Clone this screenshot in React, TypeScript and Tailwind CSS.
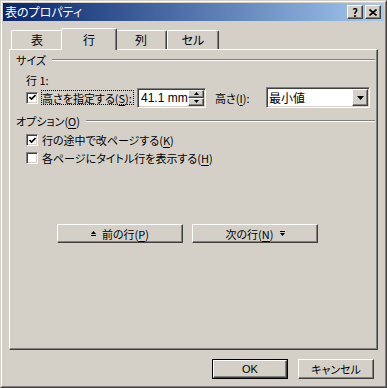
import React from "react";

const FONT = "[font-family:'Noto_Sans_CJK_JP','Noto_Sans',sans-serif] [font-feature-settings:'palt']";

const raised =
  "border border-t-white border-l-white border-r-[#404040] border-b-[#404040] shadow-[inset_-1px_-1px_0_#808080]";
const sunken =
  "border border-t-[#808080] border-l-[#808080] border-r-white border-b-white shadow-[inset_1px_1px_0_#404040,inset_-1px_-1px_0_#d4d0c8]";

const Key = ({ k }: { k: string }) => (
  <>
    (<span className="underline underline-offset-2">{k}</span>)
  </>
);

const Check = ({ checked }: { checked: boolean }) => (
  <span className={`flex h-[12px] w-[12px] shrink-0 items-center justify-center bg-white ${sunken}`}>
    {checked && (
      <svg width="7" height="7" viewBox="0 0 7 7">
        <path d="M0.5 3 L2.5 5 L6.5 1" stroke="#000" strokeWidth="1.6" fill="none" />
      </svg>
    )}
  </span>
);

const GroupTitle = ({ children }: { children: React.ReactNode }) => (
  <div className="flex h-[14px] items-center pl-[6px]">
    <span className="leading-[14px]">{children}</span>
    <span className="ml-[6px] mr-[2px] h-[2px] flex-1 border-t border-b border-t-[#808080] border-b-white" />
  </div>
);

const Tri = ({ up }: { up?: boolean }) => (
  <svg width="7" height="4" viewBox="0 0 7 4">
    <path d={up ? "M3.5 0 L7 4 L0 4 Z" : "M0 0 L7 0 L3.5 4 Z"} fill="#000" />
  </svg>
);

const Tab = ({ label, active }: { label: string; active?: boolean }) => (
  <div
    className={`flex items-center justify-center rounded-t-[2px] border-t border-l border-r border-t-white border-l-white border-r-[#404040] bg-[#d4d0c8] shadow-[inset_-1px_0_0_#808080] ${
      active ? "relative z-10 mx-[-2px] mb-[-1px] h-[22px] w-[56px]" : "h-[19px] w-[52px]"
    }`}
  >
    <span className="text-[12px] leading-[14px]">{label}</span>
  </div>
);

export default function App() {
  return (
    <div className={`h-[388px] w-[387px] bg-[#d4d0c8] text-[11px] text-black ${FONT}`}>
      <div className="h-full border border-t-[#d4d0c8] border-l-[#d4d0c8] border-r-[#404040] border-b-[#404040]">
        <div className="flex h-full flex-col border border-t-white border-l-white border-r-[#808080] border-b-[#808080] p-[1px]">
          {/* title bar */}
          <div className="flex h-[18px] items-center bg-gradient-to-r from-[#0a246a] to-[#a6caf0] pl-[2px] pr-[3px]">
            <span className="flex-1 text-[12px] leading-[14px] text-white">表のプロパティ</span>
            <div className={`flex h-[14px] w-[16px] items-center justify-center bg-[#d4d0c8] ${raised}`}>
              <span className="text-[11px] font-bold leading-none">?</span>
            </div>
            <div className={`ml-[2px] flex h-[14px] w-[16px] items-center justify-center bg-[#d4d0c8] ${raised}`}>
              <svg width="8" height="7" viewBox="0 0 8 7">
                <path d="M0.5 0.5 L7.5 6.5 M7.5 0.5 L0.5 6.5" stroke="#000" strokeWidth="1.6" />
              </svg>
            </div>
          </div>

          {/* tabs */}
          <div className="flex h-[28px] items-end pl-[8px]">
            <Tab label="表" />
            <Tab label="行" active />
            <Tab label="列" />
            <Tab label="セル" />
          </div>

          {/* panel */}
          <div className={`ml-[6px] flex h-[301px] w-[369px] flex-col bg-[#d4d0c8] ${raised}`}>
            <div className="mt-[3px]">
              <GroupTitle>サイズ</GroupTitle>
            </div>
            <div className="mt-[6px] h-[14px] pl-[16px] leading-[14px]">行 1:</div>

            <div className="flex h-[21px] items-center pl-[16px]">
              <Check checked />
              <span className="ml-[3px] flex h-[15px] w-[93px] items-center outline-1 outline-dotted outline-black -outline-offset-1 pl-[1px] leading-[14px]">
                高さを指定する<Key k="S" />:
              </span>
              <div className={`ml-[3px] flex h-[20px] w-[69px] items-center bg-white ${sunken}`}>
                <span className="flex-1 pl-[3px] text-[12px] leading-[14px] [font-family:'Liberation_Sans',sans-serif]">
                  41.1 mm
                </span>
                <div className="mr-[1px] flex h-[16px] w-[16px] flex-col">
                  <div className={`flex flex-1 items-center justify-center bg-[#d4d0c8] ${raised}`}>
                    <svg width="5" height="3" viewBox="0 0 5 3">
                      <path d="M2.5 0 L5 3 L0 3 Z" fill="#000" />
                    </svg>
                  </div>
                  <div className={`flex flex-1 items-center justify-center bg-[#d4d0c8] ${raised}`}>
                    <svg width="5" height="3" viewBox="0 0 5 3">
                      <path d="M0 0 L5 0 L2.5 3 Z" fill="#000" />
                    </svg>
                  </div>
                </div>
              </div>
              <span className="ml-[9px] w-[51px] leading-[14px]">
                高さ<Key k="I" />:
              </span>
              <div className={`flex h-[21px] w-[104px] items-center bg-white ${sunken}`}>
                <span className="flex-1 pl-[2px] text-[12px] leading-[14px]">最小値</span>
                <div className={`mr-[1px] flex h-[17px] w-[16px] items-center justify-center bg-[#d4d0c8] ${raised}`}>
                  <Tri />
                </div>
              </div>
            </div>

            <div className="mt-[6px]">
              <GroupTitle>
                オプション<Key k="O" />
              </GroupTitle>
            </div>
            <div className="mt-[5px] flex h-[14px] items-center pl-[16px]">
              <Check checked />
              <span className="ml-[4px] leading-[14px]">
                行の途中で改ページする<Key k="K" />
              </span>
            </div>
            <div className="mt-[4px] flex h-[14px] items-center pl-[16px]">
              <Check checked={false} />
              <span className="ml-[4px] leading-[14px]">
                各ページにタイトル行を表示する<Key k="H" />
              </span>
            </div>

            <div className="mt-[59px] flex gap-[9px] pl-[47px]">
              <div className={`flex h-[19px] w-[126px] items-center justify-center gap-[6px] bg-[#d4d0c8] ${raised}`}>
                <svg width="5" height="6" viewBox="0 0 5 6">
                  <path d="M2.5 0 L5 3 L0 3 Z" fill="#000" />
                  <rect x="0" y="4" width="5" height="1" fill="#000" />
                </svg>
                <span className="leading-[14px]">
                  前の行<Key k="P" />
                </span>
              </div>
              <div className={`flex h-[19px] w-[126px] items-center justify-center gap-[6px] bg-[#d4d0c8] ${raised}`}>
                <span className="leading-[14px]">
                  次の行<Key k="N" />
                </span>
                <svg width="5" height="6" viewBox="0 0 5 6">
                  <rect x="0" y="0" width="5" height="1" fill="#000" />
                  <path d="M0 2 L5 2 L2.5 5 Z" fill="#000" />
                </svg>
              </div>
            </div>
          </div>

          {/* footer buttons */}
          <div className="mt-[9px] flex justify-end gap-[10px] pr-[10px]">
            <div className="h-[20px] w-[76px] border border-black">
              <div className={`flex h-full items-center justify-center bg-[#d4d0c8] ${raised}`}>
                <span className="leading-[14px] [font-family:'Liberation_Sans',sans-serif]">OK</span>
              </div>
            </div>
            <div className={`flex h-[20px] w-[76px] items-center justify-center bg-[#d4d0c8] ${raised}`}>
              <span className="leading-[14px]">キャンセル</span>
            </div>
          </div>
        </div>
      </div>
    </div>
  );
}
